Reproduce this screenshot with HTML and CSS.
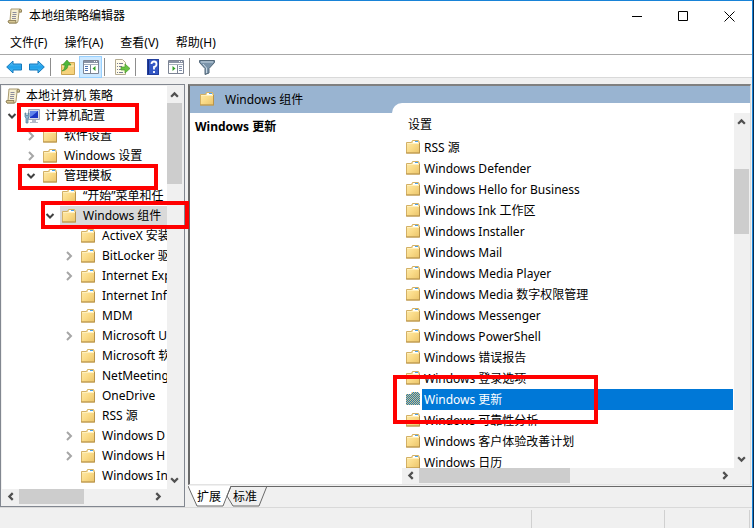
FILE: index.html
```html
<!DOCTYPE html>
<html lang="zh-CN">
<head>
<meta charset="utf-8">
<title>本地组策略编辑器</title>
<link rel="stylesheet" href="styles.css">
</head>
<body>
<svg class="defs" aria-hidden="true">
  <defs>
    <linearGradient id="fg" x1="0" y1="0" x2="1" y2="1"><stop offset="0" stop-color="#fdecb0"/><stop offset=".5" stop-color="#fadb88"/><stop offset="1" stop-color="#eac46a"/></linearGradient>
    <linearGradient id="ag" x1="0" y1="0" x2="0" y2="1"><stop offset="0" stop-color="#6fc9f7"/><stop offset=".5" stop-color="#1fa0ea"/><stop offset="1" stop-color="#4fc0f5"/></linearGradient>
    <pattern id="dots" width="2" height="2" patternUnits="userSpaceOnUse"><rect width="2" height="2" fill="#1c78c0"/><rect width="1" height="1" fill="#d9c47c"/><rect x="1" y="1" width="1" height="1" fill="#d9c47c"/></pattern>
    <symbol id="folder" viewBox="0 0 15 14">
      <path d="M.5 2.500h5l1-2h6l1 2v10.500H.5z" fill="url(#fg)" stroke="#d3b065"/>
      <path d="M7 1h5v2H7z" fill="#fff"/><path d="M9 1h3v1H9z" fill="#4da3e8"/>
      <path d="M1 3.500h6M7 3.500h6" fill="none" stroke="#fff0bd"/>
      <path d="M13.500 3v10M0 13h14" fill="none" stroke="#b9944b"/>
    </symbol>
    <symbol id="folder-on" viewBox="0 0 15 14"><path d="M0 2h5l1-2h6l2 2v11H0z" fill="url(#dots)"/></symbol>
    <symbol id="scroll" viewBox="0 0 16 16">
      <path d="M4 1h9.500q1.500 1 1 3H12l-1 9q0 2-2 2H2q-1.500-1-.5-2.500H3z" fill="#f6efd2" stroke="#a89a70"/>
      <path d="M12 4V2q1-1.500 2.500 0v2zM2 12.500h7q-1 2 .5 2.500H2q-1.500-1 0-2.500z" fill="#d8c894" stroke="#94865e"/>
      <path d="M5.500 4.500h4M5.500 6.500h4M5 8.500h4M5 10.500h4" stroke="#8c8c9c"/>
    </symbol>
    <symbol id="computer" viewBox="0 0 16 16">
      <path d="M4.500 1.500h11v10h-11z" fill="#d5dbe8" stroke="#a3a9ba"/>
      <path d="M6 3h8v7H6z" fill="#1a35c4"/><path d="M6 3h8L8 8l-2 1z" fill="#5f83ea"/>
      <path d="M8 12h4v2h2v1H6v-1h2z" fill="#b4bac8"/>
      <path d="M1 5h1v2.500h2V5h1v4L4 10v5H2v-5L1 9z" fill="#8db6d2" stroke="#4f7896" stroke-width=".7"/>
    </symbol>
    <symbol id="down" viewBox="0 0 10 10"><path d="M1.500 3L5 6.500 8.500 3" fill="none" stroke="currentColor" stroke-width="2"/></symbol>
    <symbol id="right" viewBox="0 0 10 10"><path d="M3 1l4 4-4 4" fill="none" stroke="currentColor" stroke-width="2"/></symbol>
    <symbol id="arrow" viewBox="0 0 8 8"><path d="M1 6l3-3 3 3" fill="none" stroke="currentColor" stroke-width="2"/></symbol>
    <symbol id="console" viewBox="0 0 16 14">
      <path d="M.5.5h15v13H.5z" fill="#fff" stroke="#7c8494"/><path d="M1 1h14v2H1z" fill="#8b94a6"/><path d="M11 1.500h1m1 0h1" stroke="#fff"/><path d="M1 4.500h14" stroke="#a8b0bd"/>
    </symbol>
  </defs>
</svg>
<div class="window">
  <header class="titlebar">
    <svg class="i16"><use href="#scroll"/></svg>
    <h1>本地组策略编辑器</h1>
    <div class="caption">
      <button aria-label="最小化"><svg viewBox="0 0 11 11"><path d="M0 5.500h10"/></svg></button>
      <button aria-label="最大化"><svg viewBox="0 0 11 11"><path d="M.5.5h9v9h-9z"/></svg></button>
      <button aria-label="关闭"><svg viewBox="0 0 11 11"><path d="M.5.5l10 10m0-10l-10 10"/></svg></button>
    </div>
  </header>
  <nav class="menubar"><button>文件(F)</button><button>操作(A)</button><button>查看(V)</button><button>帮助(H)</button></nav>
  <div class="toolbar">
    <button aria-label="后退"><svg class="i16" viewBox="0 0 16 16"><path d="M.700 8L7 2v3h8.500v6H7v3z" fill="url(#ag)" stroke="#1479bd"/></svg></button>
    <button aria-label="前进"><svg class="i16" viewBox="0 0 16 16"><path d="M15.300 8L9 2v3H.5v6H9v3z" fill="url(#ag)" stroke="#1479bd"/></svg></button>
    <i class="sep"></i>
    <button aria-label="向上"><svg class="i16" viewBox="0 0 16 16"><path d="M1.500 5.500h6l1-2h6v12h-13z" fill="#f6d27b" stroke="#caa452"/><path d="M2 7h12" stroke="#fff0bd"/><path d="M2 12q3-1 3-6H2.500L7 1l4 5H8q0 5-6 6z" fill="#4fb83a" stroke="#338c25" stroke-width=".6"/></svg></button>
    <button class="on" aria-label="显示/隐藏控制台树"><svg class="i16" viewBox="0 0 16 14"><use href="#console"/><path d="M7.500 5v8" stroke="#7c8494"/><path d="M2 6.500h3m-3 2h3m-3 2h3" stroke="#5276b4"/><path d="M12.500 6v5L9.500 8.500z" fill="#32a127"/></svg></button>
    <i class="sep"></i>
    <button aria-label="导出列表"><svg class="i16" viewBox="0 0 16 16"><path d="M1.500.5h7l3 3v12h-10z" fill="#fffbe9" stroke="#b3ab91"/><path d="M3 4.500h1m1 0h4m-6 3h1m1 0h3m-5 3h1m1 0h3m-5 3h1m1 0h4" stroke="#777d94"/><path d="M7 8h4V5l5 4.500-5 4.500v-3H7z" fill="#69c343" stroke="#459b2a" stroke-width=".7"/></svg></button>
    <i class="sep"></i>
    <button aria-label="帮助"><svg class="i16" viewBox="0 0 16 16"><path d="M2 0h12v16H2z" fill="#3357c5"/><path d="M2 0h2v16H2z" fill="#172d81"/><path d="M2.500.5h11v15h-11z" fill="none" stroke="#233f9c"/><path d="M6.500 5q0-2.500 2.500-2.500T11.500 5 9 8v2.500M9 12v2" fill="none" stroke="#fff" stroke-width="1.800"/></svg></button>
    <button aria-label="显示/隐藏操作窗格"><svg class="i16" viewBox="0 0 16 14"><use href="#console"/><path d="M9.500 5v8" stroke="#7c8494"/><path d="M11 6.500h3m-3 2h3m-3 2h3" stroke="#8090ad"/><path d="M4.500 6v5l3-2.500z" fill="#32a127"/></svg></button>
    <i class="sep"></i>
    <button aria-label="筛选器"><svg class="i16" viewBox="0 0 16 16"><path d="M.5 1.500h15v2L10 9.500V14l-4 1.500v-6L.5 3.500z" fill="#7a93a9" stroke="#526778"/><path d="M2 3h12M4 5l3.500 4v5" stroke="#c8d7e3" fill="none"/></svg></button>
  </div>
  <main class="panes">
    <section class="treepane" aria-label="控制台树">
      <ul class="tree">
        <li><svg class="i16"><use href="#scroll"/></svg><span>本地计算机 策略</span></li>
        <li class="l1"><svg class="chev open"><use href="#down"/></svg><svg class="i16"><use href="#computer"/></svg><span>计算机配置</span></li>
        <li class="l2"><svg class="chev"><use href="#right"/></svg><svg class="fold"><use href="#folder"/></svg><span>软件设置</span></li>
        <li class="l2"><svg class="chev"><use href="#right"/></svg><svg class="fold"><use href="#folder"/></svg><span>Windows 设置</span></li>
        <li class="l2"><svg class="chev open"><use href="#down"/></svg><svg class="fold"><use href="#folder"/></svg><span>管理模板</span></li>
        <li class="l3"><i class="chev"></i><svg class="fold"><use href="#folder"/></svg><span>“开始”菜单和任</span></li>
        <li class="l3 current"><svg class="chev open"><use href="#down"/></svg><svg class="fold"><use href="#folder"/></svg><span>Windows 组件</span></li>
        <li class="l4"><i class="chev"></i><svg class="fold"><use href="#folder"/></svg><span>ActiveX 安装</span></li>
        <li class="l4"><svg class="chev"><use href="#right"/></svg><svg class="fold"><use href="#folder"/></svg><span>BitLocker 驱</span></li>
        <li class="l4"><svg class="chev"><use href="#right"/></svg><svg class="fold"><use href="#folder"/></svg><span>Internet Exp</span></li>
        <li class="l4"><i class="chev"></i><svg class="fold"><use href="#folder"/></svg><span>Internet Inf</span></li>
        <li class="l4"><i class="chev"></i><svg class="fold"><use href="#folder"/></svg><span>MDM</span></li>
        <li class="l4"><svg class="chev"><use href="#right"/></svg><svg class="fold"><use href="#folder"/></svg><span>Microsoft U</span></li>
        <li class="l4"><i class="chev"></i><svg class="fold"><use href="#folder"/></svg><span>Microsoft 软</span></li>
        <li class="l4"><i class="chev"></i><svg class="fold"><use href="#folder"/></svg><span>NetMeeting</span></li>
        <li class="l4"><i class="chev"></i><svg class="fold"><use href="#folder"/></svg><span>OneDrive</span></li>
        <li class="l4"><i class="chev"></i><svg class="fold"><use href="#folder"/></svg><span>RSS 源</span></li>
        <li class="l4"><svg class="chev"><use href="#right"/></svg><svg class="fold"><use href="#folder"/></svg><span>Windows D</span></li>
        <li class="l4"><svg class="chev"><use href="#right"/></svg><svg class="fold"><use href="#folder"/></svg><span>Windows H</span></li>
        <li class="l4"><i class="chev"></i><svg class="fold"><use href="#folder"/></svg><span>Windows In</span></li>
      </ul>
      <div class="vbar treev"><button aria-label="向上滚动"><svg><use href="#arrow"/></svg></button><i class="thumb"></i><i class="rest"></i><button class="dn" aria-label="向下滚动"><svg><use href="#arrow"/></svg></button></div>
      <div class="hbar treeh"><button class="lt" aria-label="向左滚动"><svg><use href="#arrow"/></svg></button><i class="thumb"></i><i class="rest"></i><button class="rt" aria-label="向右滚动"><svg><use href="#arrow"/></svg></button></div>
    </section>
    <div class="right">
      <section class="detail">
        <div class="band"><svg class="fold"><use href="#folder"/></svg><span>Windows 组件</span></div>
        <div class="cols">
          <h2>Windows 更新</h2>
          <div class="listpane">
            <div class="colhead">设置</div>
            <ul class="list">
              <li><svg class="fold"><use href="#folder"/></svg><span>RSS 源</span></li>
              <li><svg class="fold"><use href="#folder"/></svg><span>Windows Defender</span></li>
              <li><svg class="fold"><use href="#folder"/></svg><span>Windows Hello for Business</span></li>
              <li><svg class="fold"><use href="#folder"/></svg><span>Windows Ink 工作区</span></li>
              <li><svg class="fold"><use href="#folder"/></svg><span>Windows Installer</span></li>
              <li><svg class="fold"><use href="#folder"/></svg><span>Windows Mail</span></li>
              <li><svg class="fold"><use href="#folder"/></svg><span>Windows Media Player</span></li>
              <li><svg class="fold"><use href="#folder"/></svg><span>Windows Media 数字权限管理</span></li>
              <li><svg class="fold"><use href="#folder"/></svg><span>Windows Messenger</span></li>
              <li><svg class="fold"><use href="#folder"/></svg><span>Windows PowerShell</span></li>
              <li><svg class="fold"><use href="#folder"/></svg><span>Windows 错误报告</span></li>
              <li><svg class="fold"><use href="#folder"/></svg><span>Windows 登录选项</span></li>
              <li class="selected"><svg class="fold"><use href="#folder-on"/></svg><span>Windows 更新</span></li>
              <li><svg class="fold"><use href="#folder"/></svg><span>Windows 可靠性分析</span></li>
              <li><svg class="fold"><use href="#folder"/></svg><span>Windows 客户体验改善计划</span></li>
              <li><svg class="fold"><use href="#folder"/></svg><span>Windows 日历</span></li>
            </ul>
            <div class="vbar listv"><button aria-label="向上滚动"><svg><use href="#arrow"/></svg></button><i class="lead"></i><i class="thumb"></i><i class="rest"></i><button class="dn" aria-label="向下滚动"><svg><use href="#arrow"/></svg></button></div>
            <div class="hbar listh"><button class="lt" aria-label="向左滚动"><svg><use href="#arrow"/></svg></button><i class="thumb"></i><i class="rest"></i><button class="rt" aria-label="向右滚动"><svg><use href="#arrow"/></svg></button></div>
          </div>
        </div>
      </section>
      <div class="tabs">
        <svg class="tabshape" viewBox="0 0 80 21"><path d="M0 0l9 20h26l6-10 3-10z" fill="#fff"/><path d="M0 0l9 20h26l8-20M43 .5l-4 9.500 6 10h26L79 0" fill="none" stroke="#696969"/><path d="M43 .5h36" stroke="#696969"/></svg>
        <button>扩展</button><button>标准</button>
      </div>
    </div>
  </main>
  <footer class="status"><span></span><span></span><span></span></footer>
  <i class="mark m1"></i><i class="mark m2"></i><i class="mark m3"></i><i class="mark m4"></i>
</div>
</body>
</html>
```
FILE: styles.css
```css
* { box-sizing: border-box; }
body {
  margin: 0;
  font: 12px/20px "Noto Sans", "Noto Sans CJK SC", sans-serif;
  color: #000;
  background: #0b2b4d;
}
.defs { position: absolute; width: 0; height: 0; }
svg { display: block; flex: none; }
button { border: 0; padding: 0; background: none; font: inherit; color: inherit; }
ul { list-style: none; margin: 0; padding: 0; }
h1, h2 { margin: 0; font-size: 12px; }
.i16 { width: 16px; height: 16px; }
.fold { width: 15px; height: 14px; }

.window {
  position: relative;
  display: flex;
  flex-direction: column;
  height: 100vh;
  margin-right: 1px;
  border: solid #1883d7;
  border-width: 1px 1px 0 0;
  background: #f0f0f0;
}
.titlebar { display: flex; align-items: center; height: 30px; padding-left: 7px; background: #fff; }
.titlebar h1 { flex: 1; margin-left: 6px; font-weight: 400; }
.caption { display: flex; }
.caption button { width: 46px; height: 29px; display: grid; place-items: center; }
.caption svg { width: 11px; height: 11px; fill: none; stroke: #000; }
.menubar { display: flex; gap: 17px; height: 23px; padding-left: 10px; background: #fff; }
.toolbar {
  display: flex;
  align-items: flex-start;
  height: 24px;
  padding: 1px 0 0 2px;
  border: solid #d9d9d9;
  border-width: 1px 0;
  border-top-color: #a8a8a8;
  background: #fff;
}
.toolbar button { width: 23px; height: 22px; display: grid; place-items: center; }
.toolbar button.on { background: #cce8ff; outline: 1px solid #99d1ff; outline-offset: -1px; }
.toolbar .sep { width: 1px; height: 18px; margin: 2px 5px 0 2px; background: #8d8d8d; }

.panes { display: flex; flex: 1; min-height: 0; gap: 3px; padding-top: 6px; }
.treepane {
  display: grid;
  grid-template: minmax(0, 1fr) 16px / minmax(0, 1fr) 16px;
  width: 185px;
  padding: 1px;
  border: 1px solid #828790;
  background: #f0f0f0;
}
.tree { overflow: hidden; background: #fff; }
.tree li { display: flex; align-items: center; height: 20px; padding-left: 3px; white-space: nowrap; }
.tree li > span { margin-left: 5px; }
.tree .fold { margin-right: 1px; }
.tree .chev { width: 10px; height: 10px; margin-right: 7px; flex: none; color: #a6a6a6; }
.tree .open { color: #404040; }
.tree .l1 { padding-left: 5px; }
.tree .l2 { padding-left: 24px; }
.tree .l3 { padding-left: 43px; }
.tree .l4 { padding-left: 62px; }
.tree .current { background: linear-gradient(to right, #fff 58px, #d9d9d9 58px); }

.vbar, .hbar { display: flex; background: #f0f0f0; }
.vbar { flex-direction: column; }
.vbar button, .hbar button { display: grid; place-items: center; flex: none; color: #505050; }
.vbar button { width: 15px; height: 17px; }
.hbar button { width: 17px; height: 15px; }
.vbar svg, .hbar svg { width: 9px; height: 9px; }
.vbar .thumb { width: 15px; background: #cdcdcd; }
.hbar .thumb { height: 15px; background: #cdcdcd; }
.dn svg { transform: rotate(180deg); }
.lt svg { transform: rotate(-90deg); }
.rt svg { transform: rotate(90deg); }
.treev .thumb { flex: 81; }
.treev .rest { flex: 287; }
.treeh .thumb { flex: 64; }
.treeh .rest { flex: 66; }
.listv .lead { flex: 39; }
.listv .thumb { flex: 65; }
.listv .rest { flex: 217; }
.listh .thumb { flex: 151; }
.listh .rest { flex: 147; }

.right { display: flex; flex-direction: column; flex: 1; min-width: 0; }
.detail {
  display: flex;
  flex-direction: column;
  flex: 1;
  min-height: 0;
  margin: 0 1px 1px 0;
  border: 2px solid #696969;
  border-top-color: #808080;
  border-right: 1px solid #d9d9d9;
  border-bottom: 1px solid #e3e3e3;
  background: #fff;
}
.band { display: flex; align-items: flex-start; gap: 10px; height: 27px; padding: 4px 0 0 10px; background: #99b4d1; }
.band .fold { margin-top: 2px; }
.cols { display: grid; grid-template: minmax(0, 1fr) / 202px minmax(0, 1fr); flex: 1; min-height: 0; }
.cols h2 { padding: 4px 5px; font-weight: 700; }
.listpane {
  display: grid;
  grid-template: 20px minmax(0, 1fr) 16px / minmax(0, 1fr) 16px;
  margin-top: -10px;
  padding: 10px 0 0 10px;
  border-top-left-radius: 10px;
  background: #fff;
}
.colhead { padding: 2px 6px; }
.list { grid-area: 2 / 1; padding-top: 4px; overflow: hidden; }
.list li { display: flex; align-items: flex-start; height: 21px; padding-left: 4px; white-space: nowrap; }
.list .fold { margin-top: 3px; }
.list li > span { flex: 1; margin: 0 1px; padding-left: 2px; line-height: 21px; }
.list .selected span { background: #0078d7; color: #fff; }
.listv { grid-area: 1 / 2 / 3 / 3; }
.listh { grid-area: 3 / 1; }
.listpane::after { content: ""; grid-area: 3 / 2; background: #f0f0f0; }

.tabs { position: relative; display: flex; gap: 12px; height: 21px; padding-left: 9px; border-top: 1px solid #696969; }
.tabs button { position: relative; }
.tabshape { position: absolute; left: 0; top: -1px; width: 80px; height: 21px; }
.status { display: grid; grid-template-columns: 532px 1fr 85px; height: 21px; padding: 2px 2px 0 0; border-top: 1px solid #d9d9d9; }
.status span { border-right: 1px solid #d0d0d0; }

.mark { position: absolute; border: 4px solid #f00; pointer-events: none; }
.m1 { left: 17px; top: 102px; width: 122px; height: 29px; }
.m2 { left: 18px; top: 163px; width: 140px; height: 26px; }
.m3 { left: 41px; top: 200px; width: 148px; height: 28px; }
.m4 { left: 393px; top: 374px; width: 205px; height: 49px; }
```
